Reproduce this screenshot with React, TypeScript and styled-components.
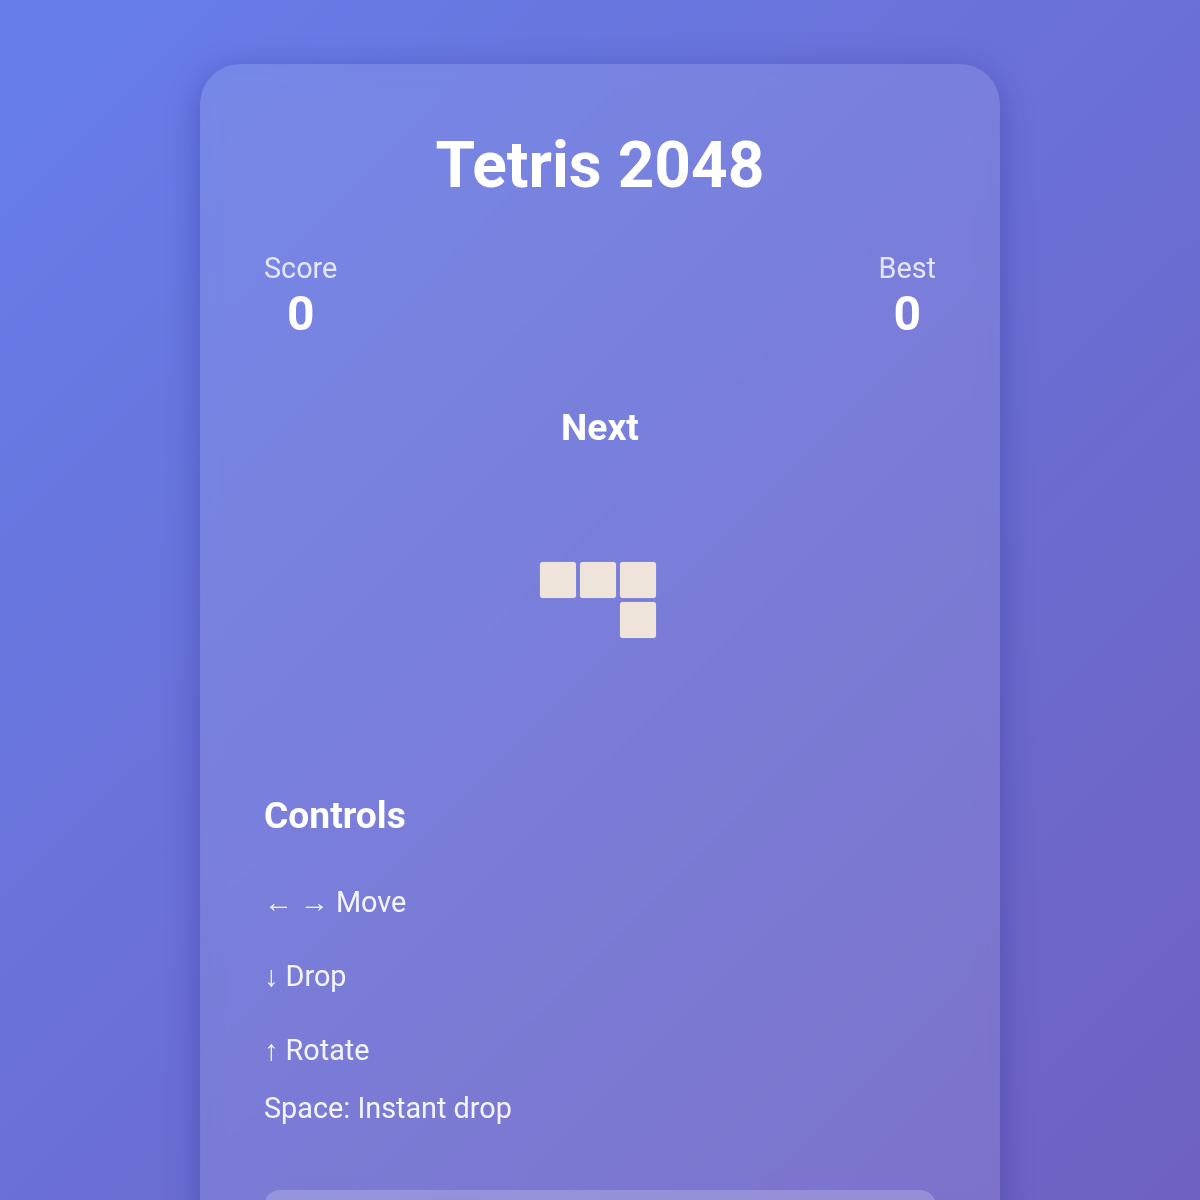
import React from "react";
import styled, { createGlobalStyle } from "styled-components";

const GlobalStyle = createGlobalStyle`
  html, body {
    margin: 0;
    padding: 0;
  }
  body {
    font-family: Roboto, "Liberation Sans", Arial, sans-serif;
    color: #ffffff;
    min-height: 100vh;
    background: linear-gradient(135deg, #667eea 0%, #6f61c1 100%);
    background-attachment: fixed;
  }
  * { box-sizing: border-box; }
`;

const Page = styled.div`
  padding: 64px 0 64px;
  display: flex;
  justify-content: center;
`;

const Card = styled.section`
  width: 800px;
  padding: 64px;
  border-radius: 40px;
  background: rgba(255, 255, 255, 0.1);
  box-shadow: 0 8px 32px rgba(31, 38, 135, 0.37);
  backdrop-filter: blur(10px);
  display: flex;
  flex-direction: column;
`;

const Title = styled.h1`
  margin: 0 0 48px;
  font-size: 64px;
  font-weight: 700;
  line-height: normal;
  text-align: center;
  color: #ffffff;
`;

const StatsRow = styled.div`
  display: flex;
  justify-content: space-between;
  align-items: flex-start;
`;

const Stat = styled.div`
  display: flex;
  flex-direction: column;
  align-items: center;
`;

const StatLabel = styled.span`
  font-size: 28.8px;
  line-height: normal;
  color: rgba(255, 255, 255, 0.8);
`;

const StatValue = styled.span`
  font-size: 48px;
  font-weight: 700;
  line-height: normal;
  color: #ffffff;
`;

const NextSection = styled.div`
  margin-top: 63px;
  display: flex;
  flex-direction: column;
  align-items: center;
`;

const SectionHeading = styled.h2<{ $align?: "left" | "center" }>`
  margin: 0;
  font-size: 37.2px;
  font-weight: 700;
  line-height: normal;
  text-align: ${(p) => p.$align ?? "center"};
  color: #ffffff;
`;

const Preview = styled.div`
  margin-top: 51px;
  height: 200px;
  width: 100%;
  display: flex;
  align-items: center;
  justify-content: center;
  padding-right: 4px;
`;

const PieceGrid = styled.div<{ $cols: number }>`
  display: grid;
  grid-template-columns: repeat(${(p) => p.$cols}, 36px);
  grid-auto-rows: 36px;
  gap: 4px;
  padding: 2px;
`;

const Tile = styled.div<{ $filled: boolean }>`
  border-radius: 3px;
  background: ${(p) => (p.$filled ? "#eee4da" : "transparent")};
  box-shadow: ${(p) => (p.$filled ? "0 0 1px rgba(255,255,255,0.6)" : "none")};
`;

const ControlsSection = styled.div`
  margin-top: 93px;
  display: flex;
  flex-direction: column;
  align-items: flex-start;
`;

const ControlLine = styled.p<{ $gap: number }>`
  margin: ${(p) => p.$gap}px 0 0;
  font-size: 28.8px;
  line-height: normal;
  color: rgba(255, 255, 255, 0.92);
`;

const NewGameButton = styled.button`
  margin-top: 65px;
  height: 76px;
  width: 100%;
  border: none;
  border-radius: 16px;
  background: rgba(255, 255, 255, 0.2);
  color: #ffffff;
  font-family: inherit;
  font-size: 24px;
  font-weight: 700;
  cursor: pointer;
`;

const nextPiece = [
  [1, 1, 1],
  [0, 0, 1],
];

const controls = [
  { text: "← → Move", gap: 48 },
  { text: "↓ Drop", gap: 40 },
  { text: "↑ Rotate", gap: 40 },
  { text: "Space: Instant drop", gap: 24 },
];

export default function App() {
  return (
    <>
      <GlobalStyle />
      <Page>
        <Card>
          <Title>Tetris 2048</Title>
          <StatsRow>
            <Stat>
              <StatLabel>Score</StatLabel>
              <StatValue>0</StatValue>
            </Stat>
            <Stat>
              <StatLabel>Best</StatLabel>
              <StatValue>0</StatValue>
            </Stat>
          </StatsRow>
          <NextSection>
            <SectionHeading>Next</SectionHeading>
            <Preview>
              <PieceGrid $cols={nextPiece[0].length}>
                {nextPiece.flatMap((row, r) =>
                  row.map((v, c) => <Tile key={`${r}-${c}`} $filled={v === 1} />)
                )}
              </PieceGrid>
            </Preview>
          </NextSection>
          <ControlsSection>
            <SectionHeading $align="left">Controls</SectionHeading>
            {controls.map((c) => (
              <ControlLine key={c.text} $gap={c.gap}>
                {c.text}
              </ControlLine>
            ))}
          </ControlsSection>
          <NewGameButton>New Game</NewGameButton>
        </Card>
      </Page>
    </>
  );
}
